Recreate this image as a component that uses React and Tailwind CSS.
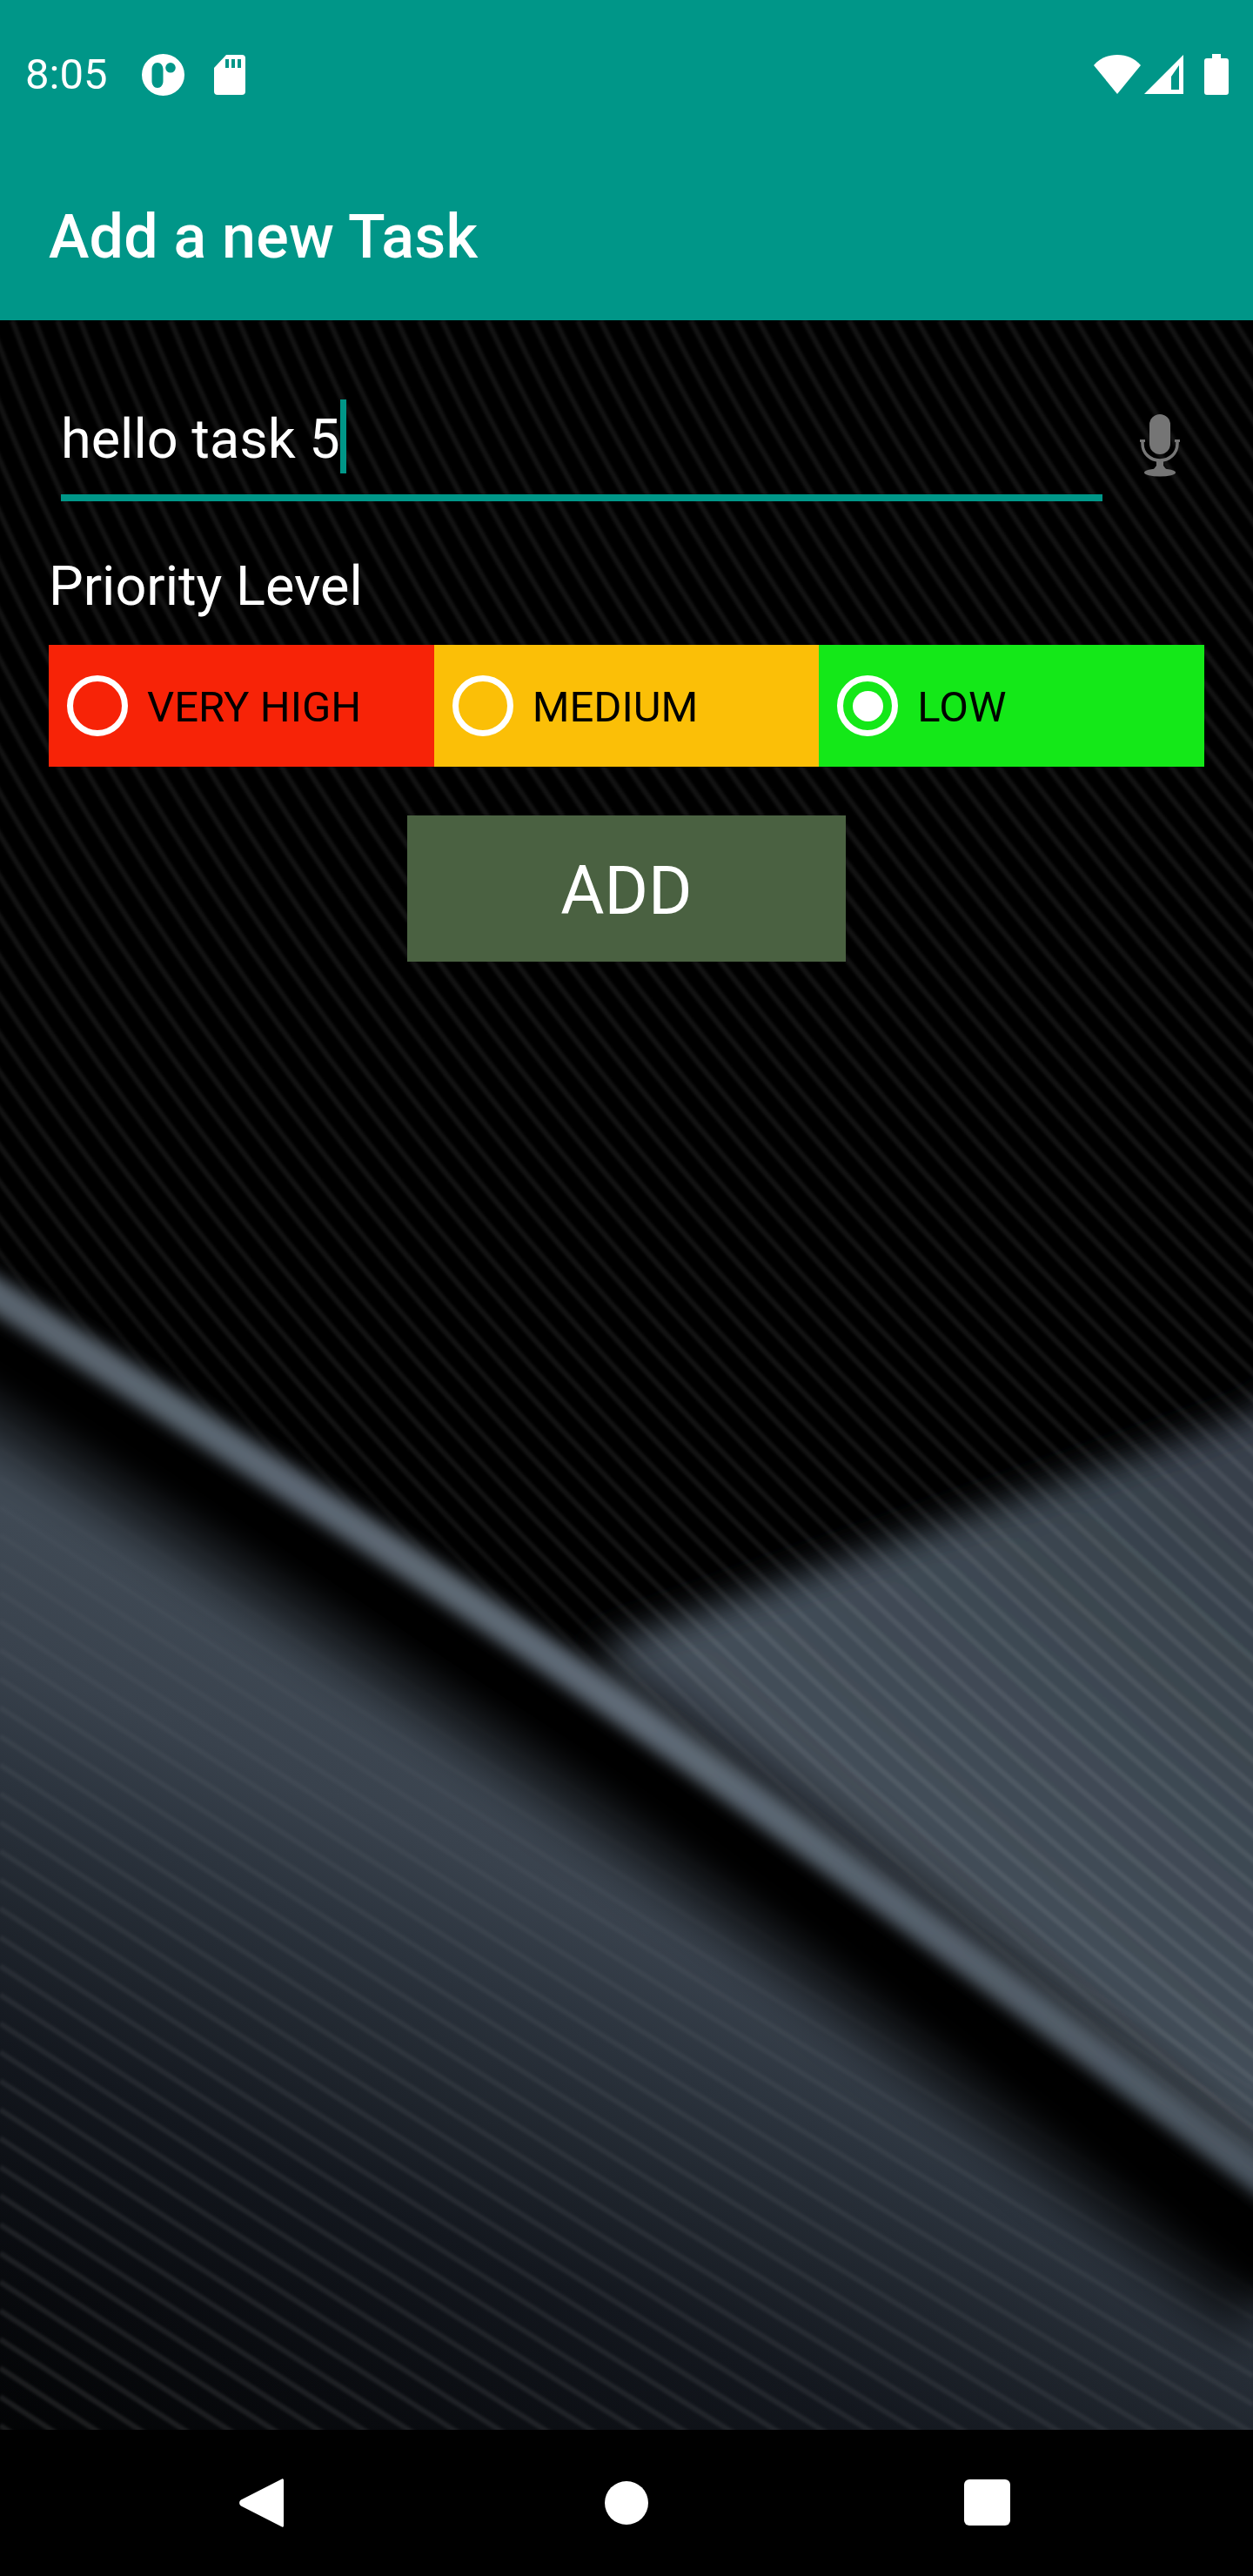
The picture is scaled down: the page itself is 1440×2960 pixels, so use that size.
import React from 'react'

const ROBOTO = 'font-["Roboto",sans-serif]'

// stripes of the wallpaper above the dark band, they open up a little going down
function upperStripes() {
  const out = []
  const c = -1500
  const s = 0.00018
  const k = 0.000468
  const h = 2300
  for (let i = 0; i < 95; i++) {
    const x0 = -1000 + i * 26
    const x = (d) => c + (x0 - c) * (1 + s * d) + 0.1 * d + 0.5 * k * d * d
    const slope0 = (x0 - c) * s + 0.1
    out.push(`M${x(0).toFixed(1)} 368Q${(x(0) + slope0 * (h / 2)).toFixed(1)} ${368 + h / 2} ${x(h).toFixed(1)} ${368 + h}`)
  }
  return out
}

function lowerStripes() {
  const out = []
  for (let i = 0; i < 40; i++) {
    const y0 = 1500 + i * 33
    out.push(`M0 ${y0}Q720 ${y0 + 470} 1440 ${y0 + 900}`)
  }
  return out
}

const BAND = 'M-40 1465C200 1620 430 1765 643 1912S1100 2240 1480 2525'
const ABOVE = 'M0 368H1440V2496C1100 2240 860 2060 643 1912S200 1620 0 1491Z'
const BODY = 'M-100 1500C220 1700 420 1850 640 1990S1150 2360 1540 2660V2900H-100Z'
const DARK = 'M-40 1525C200 1680 430 1825 643 1972S1100 2310 1480 2615'
const WEDGE = 'M690 1893L1440 1625L1600 1500V2800H690Z'

function Wallpaper() {
  return (
    <svg className="absolute inset-0 w-full h-full" viewBox="0 368 1440 2424" preserveAspectRatio="none">
      <defs>
        <linearGradient id="bodyFill" gradientUnits="userSpaceOnUse" x1="300" y1="1850" x2="-95" y2="2769">
          <stop offset="0" stopColor="#404a55" />
          <stop offset="0.164" stopColor="#39424d" />
          <stop offset="0.3" stopColor="#2b333d" />
          <stop offset="0.44" stopColor="#1f252d" />
          <stop offset="0.577" stopColor="#13171e" />
          <stop offset="0.8" stopColor="#090b0f" />
          <stop offset="1" stopColor="#020304" />
        </linearGradient>
        <linearGradient id="lineFade" gradientUnits="userSpaceOnUse" x1="300" y1="1850" x2="-95" y2="2769">
          <stop offset="0" stopColor="#fff" stopOpacity="0.015" />
          <stop offset="0.3" stopColor="#fff" stopOpacity="0.05" />
          <stop offset="1" stopColor="#fff" stopOpacity="0.1" />
        </linearGradient>
        <linearGradient id="wedgeFill" gradientUnits="userSpaceOnUse" x1="900" y1="2100" x2="1300" y2="1650">
          <stop offset="0" stopColor="#46515c" />
          <stop offset="1" stopColor="#37414b" />
        </linearGradient>
        <linearGradient id="bandFill" gradientUnits="userSpaceOnUse" x1="0" y1="1490" x2="1440" y2="2500">
          <stop offset="0" stopColor="#5a6570" />
          <stop offset="0.5" stopColor="#606c78" />
          <stop offset="1" stopColor="#4c5762" />
        </linearGradient>
        <filter id="b1" x="-10%" y="-10%" width="120%" height="120%"><feGaussianBlur stdDeviation="1" /></filter>
        <filter id="b2" x="-10%" y="-10%" width="120%" height="120%"><feGaussianBlur stdDeviation="1.500" /></filter>
        <filter id="b20" x="-10%" y="-10%" width="120%" height="120%"><feGaussianBlur stdDeviation="20" /></filter>
        <filter id="b30" x="-10%" y="-10%" width="120%" height="120%"><feGaussianBlur stdDeviation="30" /></filter>
        <filter id="b14" x="-10%" y="-10%" width="120%" height="120%"><feGaussianBlur stdDeviation="14" /></filter>
        <filter id="b9" x="-10%" y="-10%" width="120%" height="120%"><feGaussianBlur stdDeviation="9" /></filter>
        <clipPath id="aboveClip"><path d={ABOVE} /></clipPath>
      </defs>
      <rect x="0" y="368" width="1440" height="2424" fill="#000" />

      {/* upper part: black with fine stripes and the lit wedge on the right */}
      <path d={WEDGE} fill="url(#wedgeFill)" filter="url(#b20)" clipPath="url(#aboveClip)" />
      <g clipPath="url(#aboveClip)">
        <g filter="url(#b2)" stroke="#fff" strokeOpacity="0.075" strokeWidth="6" fill="none">
          {upperStripes().map((d, i) => <path key={i} d={d} />)}
        </g>
      </g>

      {/* lower part */}
      <path d={BODY} fill="url(#bodyFill)" />
      <g filter="url(#b2)" stroke="url(#lineFade)" strokeWidth="6" fill="none">
        {lowerStripes().map((d, i) => <path key={i} d={d} />)}
      </g>

      {/* soft fade into the dark strip, then the strip and the band */}
      <path d={DARK} stroke="#030405" strokeOpacity="0.8" strokeWidth="170" fill="none" filter="url(#b30)" />
      <path d={DARK} stroke="#030405" strokeWidth="70" fill="none" filter="url(#b14)" />
      <path d={BAND} stroke="url(#bandFill)" strokeWidth="38" fill="none" filter="url(#b9)" />
    </svg>
  )
}

function Radio({ label, color, checked }) {
  return (
    <div className={`flex-1 flex items-center pl-[21px] gap-[22px] ${color}`}>
      <div className="w-[70px] h-[70px] rounded-full border-[7px] border-white flex items-center justify-center">
        {checked && <div className="w-[35px] h-[35px] rounded-full bg-white" />}
      </div>
      <span className="text-[49px] leading-none pt-[2px] text-black">{label}</span>
    </div>
  )
}

export default function App() {
  return (
    <div className={`w-[1440px] h-[2960px] flex flex-col bg-black overflow-hidden ${ROBOTO}`}>
      {/* status bar */}
      <div className="h-[172px] bg-[#009688] flex items-start justify-between pt-[62px] pl-[29px] pr-[28px]">
        <div className="flex items-center">
          <span className="text-[49px] leading-[48px] text-white w-[134px]">8:05</span>
          <svg width="49" height="48" viewBox="0 0 49 48" className="mr-[34px]">
            <path fillRule="evenodd" fill="#fff" d="M24.5 0a24.5 24 0 1 0 0 48a24.5 24 0 1 0 0-48ZM18 10c3.800 0 6.500 3.500 6.500 8v13c0 4.500-2.700 8-6.500 8s-6.500-3.500-6.500-8V18c0-4.500 2.700-8 6.500-8ZM33 10a5.800 5.800 0 1 1 0 11.600a5.800 5.800 0 1 1 0-11.600Z" />
          </svg>
          <svg width="36" height="46" viewBox="0 0 36 46">
            <path fill="#fff" d="M14 0H32a4 4 0 0 1 4 4V42a4 4 0 0 1-4 4H4a4 4 0 0 1-4-4V15Z" />
            <path fill="#009688" d="M13 5h4v10h-4zM20 5h4v10h-4zM27 5h4v10h-4z" />
          </svg>
        </div>
        <div className="flex items-start">
          <svg width="54" height="45" viewBox="0 0 54 45" className="mt-[1px] mr-[4px]">
            <path fill="#fff" d="M27 45L0 12C7 4 16 0 27 0S47 4 54 12Z" />
          </svg>
          <svg width="45" height="45" viewBox="0 0 45 45" className="mt-[1px] mr-[24px]">
            <path fill="#fff" fillRule="evenodd" d="M0 45L45 0V45ZM40 12L31 25V40H40Z" />
          </svg>
          <svg width="28" height="47" viewBox="0 0 28 47">
            <path fill="#fff" d="M9 0H19V5H25a3 3 0 0 1 3 3V44a3 3 0 0 1-3 3H3a3 3 0 0 1-3-3V8a3 3 0 0 1 3-3H9Z" />
          </svg>
        </div>
      </div>

      {/* toolbar */}
      <div className="h-[196px] bg-[#009688] flex items-center pl-[56px] pt-[4px]">
        <h1 className="text-[70px] leading-none font-medium tracking-[0.2px] text-white">Add a new Task</h1>
      </div>

      {/* content */}
      <div className="relative flex-1">
        <Wallpaper />
        <div className="relative flex flex-col">
          <div className="flex items-start pt-[91px] pl-[70px]">
            <div className="w-[1197px] h-[117px] border-b-[8px] border-[#009688] flex items-start">
              <span className="text-[63px] leading-[74px] text-white mt-[9px]">hello task 5</span>
              <span className="w-[7px] h-[85px] bg-[#009688]" />
            </div>
            <svg width="46" height="72" viewBox="0 0 46 72" className="ml-[43px] mt-[17px]">
              <rect x="11" y="0" width="24" height="46" rx="12" fill="#757575" />
              <path d="M3 30V34C3 45 12 53 23 53S43 45 43 34V30" stroke="#757575" strokeWidth="3.500" fill="none" />
              <path d="M0 29H6V32H0ZM40 29H46V32H40Z" fill="#757575" />
              <path d="M19 53H27V59L30 63H16L19 59Z" fill="#757575" />
              <ellipse cx="23" cy="67" rx="18" ry="4.500" fill="#757575" />
            </svg>
          </div>
          <p className="ml-[56px] mt-[61px] text-[63px] leading-[74px] text-white">Priority Level</p>
          <div className="flex w-[1328px] h-[140px] ml-[56px] mt-[30px]">
            <Radio label="VERY HIGH" color="bg-[#f72307]" />
            <Radio label="MEDIUM" color="bg-[#fbbf07]" />
            <Radio label="LOW" color="bg-[#14e818]" checked />
          </div>
          <button className="self-center w-[504px] h-[168px] mt-[56px] pt-[6px] bg-[#4a6141] text-white text-[77px] leading-none">ADD</button>
        </div>
      </div>

      {/* nav bar */}
      <div className="h-[168px] bg-black relative flex items-start pt-[56px]">
        <svg width="51" height="56" viewBox="0 0 51 56" className="ml-[275px]">
          <path fill="#fff" d="M49 0.500c1-.8 2 0 2 1.500V54c0 1.500-1 2.300-2 1.500L2 31.500c-2.500-1.500-2.500-5.500 0-7Z" />
        </svg>
        <div className="w-[50px] h-[50px] rounded-full bg-white ml-[369px] mt-[3px]" />
        <div className="w-[53px] h-[53px] rounded-[6px] bg-white ml-[363px] mt-[1px]" />
      </div>
    </div>
  )
}
